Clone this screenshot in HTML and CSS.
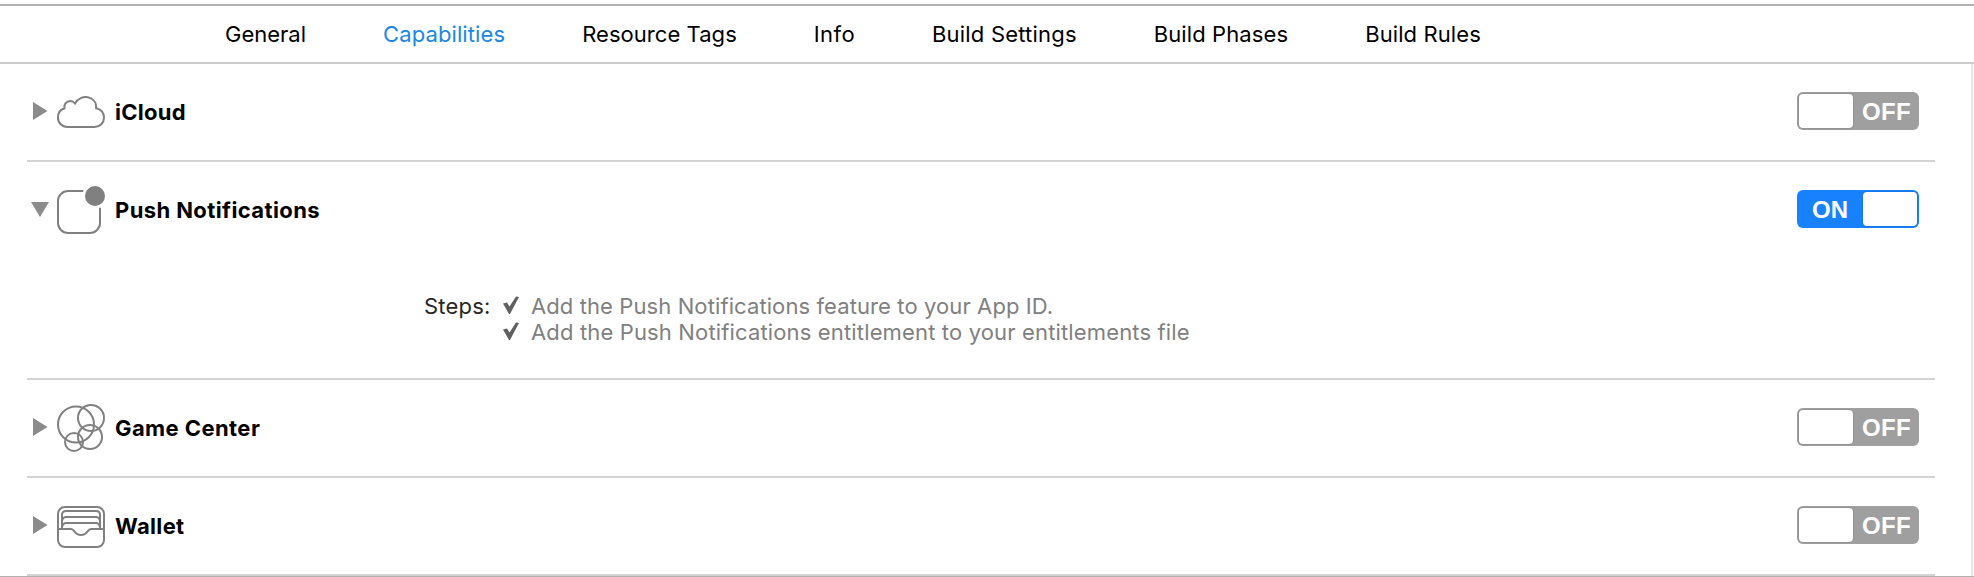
FILE: index.html
```
<!DOCTYPE html>
<html lang="en">
<head>
<meta charset="utf-8">
<title>Capabilities</title>
<link rel="stylesheet" href="styles.css">
</head>
<body>
<nav class="tabs">
  <a class="tab">General</a>
  <a class="tab t-capabilities active">Capabilities</a>
  <a class="tab t-tags">Resource Tags</a>
  <a class="tab t-info">Info</a>
  <a class="tab t-settings">Build Settings</a>
  <a class="tab t-phases">Build Phases</a>
  <a class="tab t-rules">Build Rules</a>
</nav>
<main class="panel">
  <section class="capability">
    <div class="head">
      <svg class="arrow" width="20" height="20" viewBox="0 0 20 20"><path d="M3 1V19L17.500 10Z"/></svg>
      <svg class="icon" viewBox="0 0 48 48"><path d="M10.500 39C5 39 1 35 1 29.500C1 25 3.500 21.500 7.500 20.300C6.500 14 14 10.500 18 15.500C23.500 5 40 8 39.200 20.300C44 21 47 25 47 29.500C47 35 43 39 37.500 39Z"/></svg>
      <h2 class="name n-icloud">iCloud</h2>
      <div class="toggle off"><span class="knob"></span><span class="state">OFF</span></div>
    </div>
  </section>
  <section class="capability open">
    <div class="head">
      <svg class="arrow" width="20" height="20" viewBox="0 0 20 20"><path d="M1 3H19L10 18Z"/></svg>
      <svg class="icon" viewBox="0 0 48 48"><path d="M26.300 5H11A10 10 0 0 0 1 15V37A10 10 0 0 0 11 47H33A10 10 0 0 0 43 37V21.700"/><circle class="solid" cx="38" cy="10" r="10"/></svg>
      <h2 class="name n-push">Push Notifications</h2>
      <div class="toggle on"><span class="state">ON</span><span class="knob"></span></div>
    </div>
    <div class="steps">
      <span class="steps-label">Steps:</span>
      <ul class="step-list">
        <li><svg class="check" width="18" height="20" viewBox="0 0 18 20"><path d="M1 7.500L5 6.500L7.500 10.500L14 0.500L17 1L8 18H7Z"/></svg><span class="s-one">Add the Push Notifications feature to your App ID.</span></li>
        <li><svg class="check" width="18" height="20" viewBox="0 0 18 20"><path d="M1 7.500L5 6.500L7.500 10.500L14 0.500L17 1L8 18H7Z"/></svg><span class="s-two">Add the Push Notifications entitlement to your entitlements file</span></li>
      </ul>
    </div>
  </section>
  <section class="capability">
    <div class="head">
      <svg class="arrow" width="20" height="20" viewBox="0 0 20 20"><path d="M3 1V19L17.500 10Z"/></svg>
      <svg class="icon" viewBox="0 0 48 48"><circle cx="19" cy="20.500" r="18"/><circle cx="34" cy="14" r="13"/><circle cx="33" cy="33" r="12"/><circle cx="17" cy="38" r="9"/></svg>
      <h2 class="name n-game">Game Center</h2>
      <div class="toggle off"><span class="knob"></span><span class="state">OFF</span></div>
    </div>
  </section>
  <section class="capability">
    <div class="head">
      <svg class="arrow" width="20" height="20" viewBox="0 0 20 20"><path d="M3 1V19L17.500 10Z"/></svg>
      <svg class="icon" viewBox="0 0 48 48"><rect x="1" y="5" width="46" height="40" rx="7"/><path d="M1 27H14C18 27 17 33 24 33S30 27 34 27H47M5 27V13Q5 9 9 9H39Q43 9 43 13V27M5 19Q6 15 9 15H39Q42 15 43 19M5 25Q6 21 9 21H39Q42 21 43 25"/></svg>
      <h2 class="name n-wallet">Wallet</h2>
      <div class="toggle off"><span class="knob"></span><span class="state">OFF</span></div>
    </div>
  </section>
</main>
</body>
</html>
```

FILE: styles.css
```
* { box-sizing: border-box; }
body {
  margin: 0;
  padding-top: 4px;
  height: 577px;
  overflow: hidden;
  display: flex;
  flex-direction: column;
  background: #fff;
  border-bottom: 1px solid #b0b0b0;
  font: 22px/26px Inter, "Liberation Sans", sans-serif;
  color: #000;
}
.tabs {
  height: 60px;
  flex: none;
  display: flex;
  align-items: center;
  gap: 77px;
  padding-left: 225px;
  border-top: 2px solid #b0b0b0;
  border-bottom: 2px solid #ccc;
}
.tab { white-space: nowrap; }
.tab.active { color: #1a87e2; }
.t-capabilities, .t-phases, .t-rules { letter-spacing: .1px; }
.t-tags { letter-spacing: .05px; }
.t-info { letter-spacing: .4px; }
.t-settings { letter-spacing: .2px; }
.panel {
  height: 512px;
  flex: none;
  margin-right: 1px;
  padding: 0 36px 0 27px;
  border-right: 2px solid #e6e6e6;
}
.capability { border-bottom: 2px solid #d4d4d4; }
.open { height: 218px; }
.head {
  height: 96px;
  display: flex;
  align-items: center;
  padding: 0 16px 0 3px;
}
.arrow { fill: #8b8b8b; margin: 0 7px 2px 0; flex: none; }
.icon { width: 48px; height: 48px; flex: none; fill: none; stroke: #808080; stroke-width: 2; }
.icon .solid { fill: #808080; stroke: none; }
.name {
  margin: 0 0 0 10px;
  flex: 1;
  font-size: 22px;
  font-weight: 700;
}
.n-icloud { letter-spacing: .25px; }
.n-push { letter-spacing: .4px; }
.n-game { letter-spacing: .42px; }
.n-wallet { letter-spacing: .35px; }
.toggle {
  width: 122px;
  height: 38px;
  display: flex;
  padding: 2px;
  border-radius: 6px;
  margin-bottom: 2px;
  color: #fff;
  font: bold 24px/35px "Liberation Sans", Arial, sans-serif;
}
.off { background: #9f9f9f; }
.on { background: #1781fe; }
.knob { width: 54px; height: 34px; border-radius: 4px; background: #fff; box-shadow: 0 0 2px rgba(0, 0, 0, .25); }
.off .state { margin-left: 9px; letter-spacing: .3px; }
.on .state { width: 64px; padding-left: 13px; }
.steps { display: flex; padding: 35px 0 0 397px; }
.steps-label { width: 78px; color: #262626; letter-spacing: .2px; }
.step-list { list-style: none; margin: 0; padding: 0; color: #808080; }
.step-list li { height: 26px; display: flex; align-items: center; white-space: nowrap; }
.check { fill: #606060; margin-right: 11px; }
.s-one { letter-spacing: .1px; }
.s-two { letter-spacing: .15px; }
```
